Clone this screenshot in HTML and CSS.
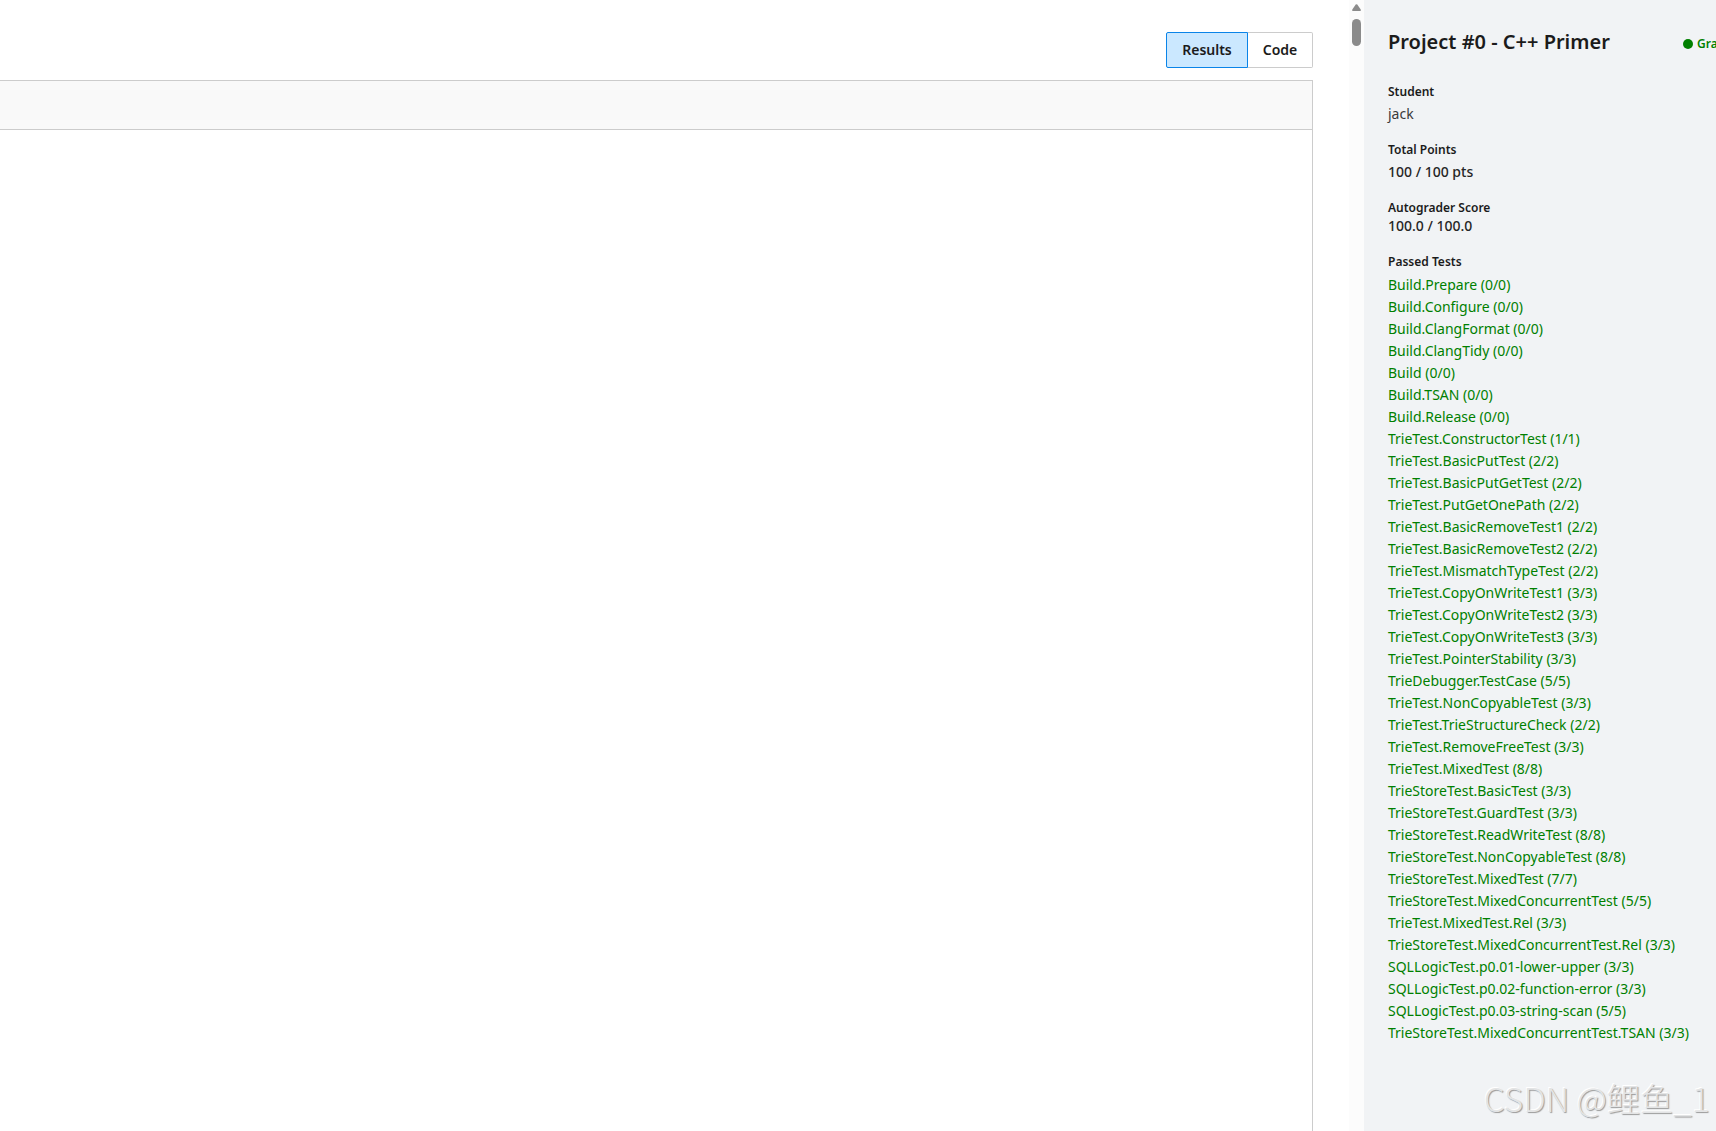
FILE: index.html
```html
<!DOCTYPE html>
<html lang="en">
<head>
<meta charset="utf-8">
<title>Project #0 - C++ Primer</title>
<link rel="stylesheet" href="styles.css">
</head>
<body>
<div class="layout">
  <main class="results">
    <div class="toolbar">
      <button class="tab tab-active">Results</button><button class="tab tab-code">Code</button>
    </div>
    <section class="panel"><div class="panel-header"></div></section>
  </main>
  <div class="scrollbar">
    <svg class="arrow" width="9" height="7" viewBox="0 0 9 7"><path d="M3.7.6Q4.5-.2 5.3.6L8.7 5.4Q9.2 7 7.8 7H1.2Q-.2 7 .3 5.4Z" fill="#8b8b8b"/></svg>
    <div class="thumb"></div>
  </div>
  <aside class="sidebar">
    <header class="heading"><h1 class="title">Project #0 - C++ Primer</h1><div class="status"><span class="dot"></span>Graded</div></header>
    <section class="field student"><h2 class="label">Student</h2><div class="value">jack</div></section>
    <section class="field points"><h2 class="label">Total Points</h2><div class="value strong">100 / 100 pts</div></section>
    <section class="field score"><h2 class="label">Autograder Score</h2><div class="value strong">100.0 / 100.0</div></section>
    <section class="field passed"><h2 class="label">Passed Tests</h2>
      <ul class="tests">
        <li>Build.Prepare (0/0)</li>
        <li>Build.Configure (0/0)</li>
        <li>Build.ClangFormat (0/0)</li>
        <li>Build.ClangTidy (0/0)</li>
        <li>Build (0/0)</li>
        <li>Build.TSAN (0/0)</li>
        <li>Build.Release (0/0)</li>
        <li>TrieTest.ConstructorTest (1/1)</li>
        <li>TrieTest.BasicPutTest (2/2)</li>
        <li>TrieTest.BasicPutGetTest (2/2)</li>
        <li>TrieTest.PutGetOnePath (2/2)</li>
        <li>TrieTest.BasicRemoveTest1 (2/2)</li>
        <li>TrieTest.BasicRemoveTest2 (2/2)</li>
        <li>TrieTest.MismatchTypeTest (2/2)</li>
        <li>TrieTest.CopyOnWriteTest1 (3/3)</li>
        <li>TrieTest.CopyOnWriteTest2 (3/3)</li>
        <li>TrieTest.CopyOnWriteTest3 (3/3)</li>
        <li>TrieTest.PointerStability (3/3)</li>
        <li>TrieDebugger.TestCase (5/5)</li>
        <li>TrieTest.NonCopyableTest (3/3)</li>
        <li>TrieTest.TrieStructureCheck (2/2)</li>
        <li>TrieTest.RemoveFreeTest (3/3)</li>
        <li>TrieTest.MixedTest (8/8)</li>
        <li>TrieStoreTest.BasicTest (3/3)</li>
        <li>TrieStoreTest.GuardTest (3/3)</li>
        <li>TrieStoreTest.ReadWriteTest (8/8)</li>
        <li>TrieStoreTest.NonCopyableTest (8/8)</li>
        <li>TrieStoreTest.MixedTest (7/7)</li>
        <li>TrieStoreTest.MixedConcurrentTest (5/5)</li>
        <li>TrieTest.MixedTest.Rel (3/3)</li>
        <li>TrieStoreTest.MixedConcurrentTest.Rel (3/3)</li>
        <li>SQLLogicTest.p0.01-lower-upper (3/3)</li>
        <li>SQLLogicTest.p0.02-function-error (3/3)</li>
        <li>SQLLogicTest.p0.03-string-scan (5/5)</li>
        <li>TrieStoreTest.MixedConcurrentTest.TSAN (3/3)</li>
      </ul>
    </section>
  </aside>
</div>
<div class="watermark">CSDN @鲤鱼_1</div>
</body>
</html>
```
FILE: styles.css
```css
* { box-sizing: border-box; }
body { margin: 0; overflow: hidden; background: #fff; color: #1b1b1b; font: 14px/22px "Noto Sans", sans-serif; }
h1, h2, ul { margin: 0; padding: 0; }
.layout { display: grid; grid-template-columns: 1349px 15px 352px; height: 1131px; overflow: hidden; }
.results { display: flex; flex-direction: column; padding: 32px 36px 0 0; }
.toolbar { display: flex; justify-content: flex-end; height: 36px; margin-bottom: 12px; }
.tab { padding: 0; border: 1px solid #ccc; background: #fff; color: #1b1b1b; font: 600 14px/34px "Noto Sans", sans-serif; }
.tab-active { width: 82px; border-color: #0a84e8; border-radius: 2px 0 0 2px; background: #cbe8ff; }
.tab-code { width: 65px; border-left: 0; border-radius: 0 2px 2px 0; }
.panel { flex: 1; border: solid #ccc; border-width: 1px 1px 0 0; }
.panel-header { height: 49px; border-bottom: 1px solid #ccc; background: #f9f9f9; }
.scrollbar { display: flex; flex-direction: column; align-items: center; padding-top: 4px; background: #fcfcfc; }
.arrow { display: block; }
.thumb { width: 9px; height: 27px; margin-top: 8px; border-radius: 5px; background: #8b8b8b; }
.sidebar { padding: 28px 0 0 24px; background: #f1f3f5; overflow: hidden; }
.heading { display: flex; height: 28px; white-space: nowrap; }
.title { width: 295px; flex: none; font-size: 20px; line-height: 28px; font-weight: 600; }
.status { display: flex; align-items: center; gap: 4px; padding-top: 3px; color: #008000; font-size: 12px; font-weight: 600; }
.dot { width: 10px; height: 10px; border-radius: 50%; background: #008000; }
.label { font-size: 12px; line-height: 18px; font-weight: 600; }
.value { color: #3a3a3a; }
.strong { color: #262626; font-weight: 550; }
.student { padding-top: 27px; }
.student .value, .points .value { padding-top: 2px; }
.points { padding-top: 16px; }
.score { padding-top: 16px; }
.score .value { line-height: 18px; }
.passed { padding-top: 18px; }
.tests { padding-top: 3px; list-style: none; color: #008000; white-space: nowrap; }
.watermark { position: absolute; left: 1484px; top: 1076px; color: #e3e4e5; font: 300 33px/44px "Noto Sans CJK SC", sans-serif; letter-spacing: .2px; white-space: nowrap; text-shadow: 1px 1px 1px #999, -1px -1px 0 #fff; }
```
